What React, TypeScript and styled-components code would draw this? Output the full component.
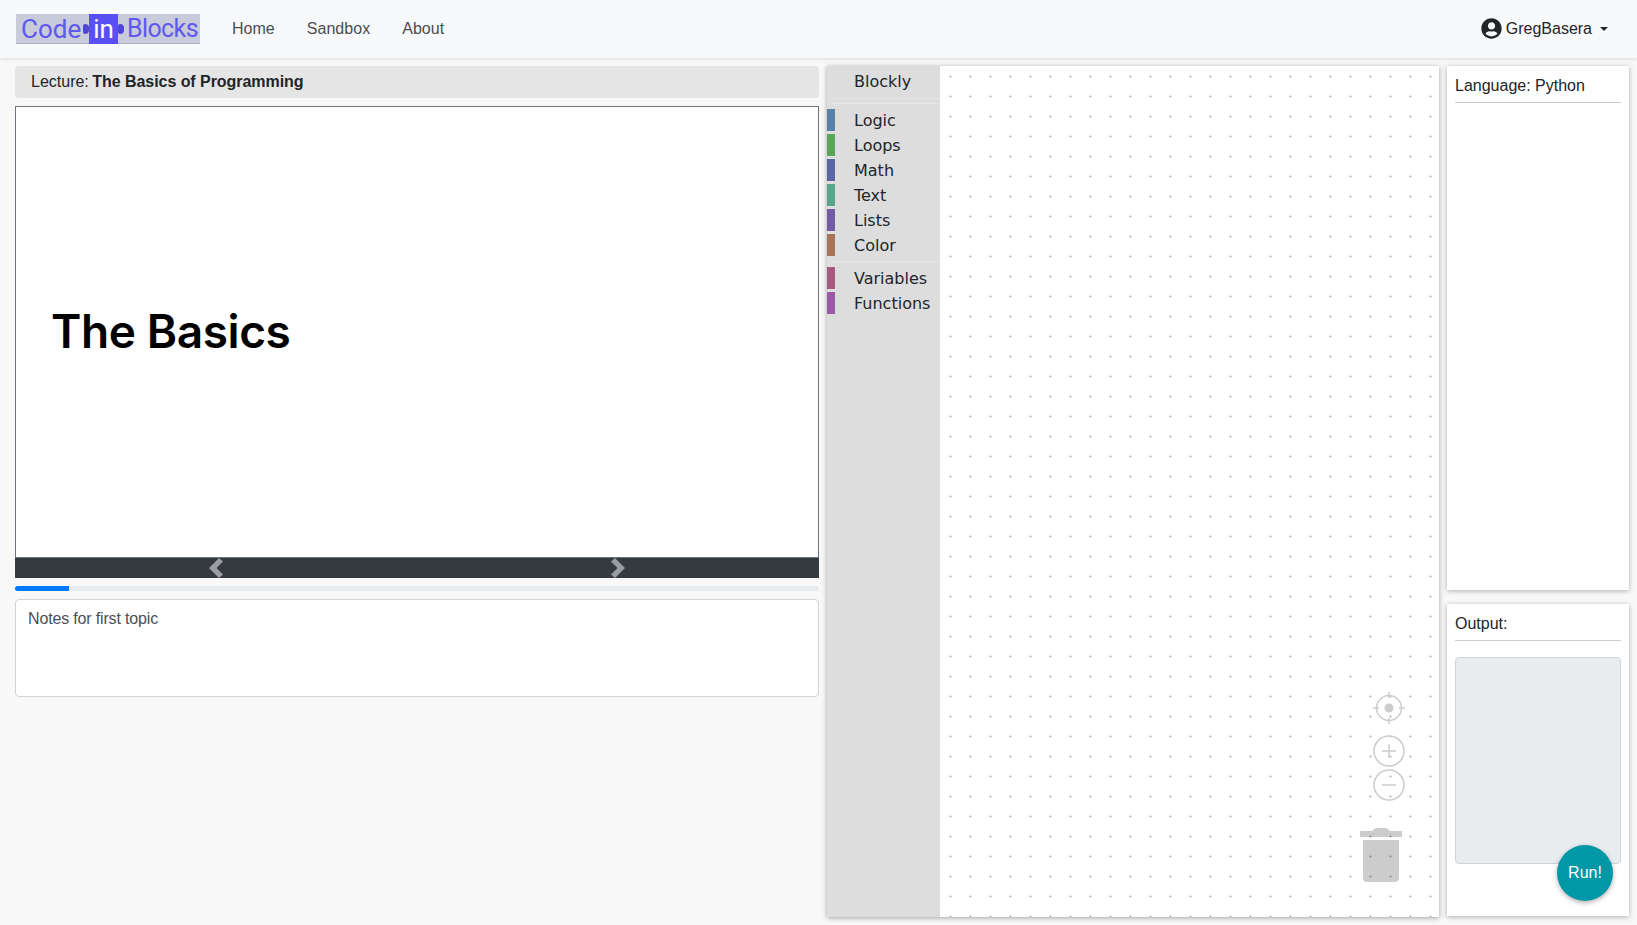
import styled, { createGlobalStyle } from "styled-components";
import { FaUserCircle } from "react-icons/fa";

const categories = [
  { name: "Logic", color: "#5b80a5" },
  { name: "Loops", color: "#5ba55b" },
  { name: "Math", color: "#5b67a5" },
  { name: "Text", color: "#5ba58c" },
  { name: "Lists", color: "#745ba5" },
  { name: "Color", color: "#a5745b" },
];

const extras = [
  { name: "Variables", color: "#a55b80" },
  { name: "Functions", color: "#995ba5" },
];

export default function App() {
  return (
    <>
      <GlobalStyle />
      <Navbar>
        <Logo>
          <LogoWord>Code</LogoWord>
          <LogoBlock>in</LogoBlock>
          <LogoWordTight>Blocks</LogoWordTight>
        </Logo>
        <NavLink>Home</NavLink>
        <NavLink>Sandbox</NavLink>
        <NavLink>About</NavLink>
        <UserMenu>
          <UserIcon size={21} color="#212529" />
          <span>GregBasera</span>
          <Caret />
        </UserMenu>
      </Navbar>
      <Main>
        <LeftColumn>
          <LectureBar>
            Lecture: <b>The Basics of Programming</b>
          </LectureBar>
          <Slide>
            <SlideTitle>The Basics</SlideTitle>
          </Slide>
          <SlideControls>
            <ControlCell>
              <svg width="14" height="20" viewBox="0 0 14 20">
                <path d="M10 0l4 3.5L7.5 10 14 16.500 10 20 0 10z" fill="#9a9da0" />
              </svg>
            </ControlCell>
            <ControlCell>
              <svg width="14" height="20" viewBox="0 0 14 20">
                <path d="M4 0L0 3.500 6.500 10 0 16.500 4 20 14 10z" fill="#9a9da0" />
              </svg>
            </ControlCell>
          </SlideControls>
          <Progress>
            <ProgressFill />
          </Progress>
          <Notes>Notes for first topic</Notes>
        </LeftColumn>
        <BlocklyPanel>
          <Toolbox>
            <ToolboxHeader>Blockly</ToolboxHeader>
            <Separator $double />
            {categories.map((c) => (
              <Category key={c.name} $color={c.color}>
                {c.name}
              </Category>
            ))}
            <Separator />
            {extras.map((c) => (
              <Category key={c.name} $color={c.color}>
                {c.name}
              </Category>
            ))}
          </Toolbox>
          <Workspace>
            <GridLayer width="100%" height="100%">
              <defs>
                <pattern id="dots" width="20" height="20" patternUnits="userSpaceOnUse">
                  <rect x="9" y="10" width="3" height="1" fill="#ccc" />
                  <rect x="10" y="9" width="1" height="3" fill="#ccc" />
                </pattern>
              </defs>
              <rect width="100%" height="100%" fill="url(#dots)" />
            </GridLayer>
            <WorkspaceControls width="50" height="200" viewBox="0 0 50 200">
              <g fill="none" stroke="#ccc" strokeWidth="1.5">
                <circle cx="25" cy="20" r="12.5" />
                <path d="M25 4v6M25 30v6M9 20h6M35 20h6" />
                <circle cx="25" cy="63" r="15" />
                <path d="M25 56v14M18 63h14" />
                <circle cx="25" cy="97" r="15" />
                <path d="M18 97h14" />
              </g>
              <circle cx="25" cy="20" r="4.500" fill="#ccc" />
            </WorkspaceControls>
            <Trash width="42" height="54" viewBox="0 0 42 54">
              <path
                d="M0 3h12.500c1-2 2.500-3 4.500-3h8c2 0 3.500 1 4.500 3H42v6H0zM3 12h36v38c0 2.500-1.500 4-4 4H7c-2.500 0-4-1.500-4-4z"
                fill="#000"
                fillOpacity="0.2"
              />
            </Trash>
          </Workspace>
        </BlocklyPanel>
        <RightColumn>
          <LanguageCard>
            <CardTitle>Language: Python</CardTitle>
          </LanguageCard>
          <OutputCard>
            <CardTitle>Output:</CardTitle>
            <OutputBox />
            <RunButton>Run!</RunButton>
          </OutputCard>
        </RightColumn>
      </Main>
    </>
  );
}

const GlobalStyle = createGlobalStyle`
  html, body {
    margin: 0;
    height: 100%;
    overflow: hidden;
    background: #f8f8f8;
    font-family: "Liberation Sans", Arial, sans-serif;
    font-size: 16px;
    color: #212529;
  }
  * {
    box-sizing: border-box;
  }
`;

const Navbar = styled.nav`
  display: flex;
  align-items: center;
  height: 58px;
  padding: 0 29px 0 16px;
  background: #f8f9fa;
  box-shadow: 0 1px 4px rgba(0, 0, 0, 0.12);
`;

const Logo = styled.div`
  display: flex;
  align-items: center;
  width: 184px;
  height: 30px;
  margin-right: 16px;
  padding-left: 5px;
  background: #c8cbda;
  border-bottom: 1px solid #aeb0c2;
`;

const LogoWord = styled.span`
  width: 60px;
  font-family: Roboto, sans-serif;
  font-size: 26px;
  font-weight: 400;
  color: #6057ef;
`;

const LogoWordTight = styled(LogoWord)`
  width: 69px;
  margin-left: 9px;
  font-size: 25px;
  letter-spacing: -0.6px;
`;

const LogoBlock = styled.span`
  position: relative;
  flex: none;
  width: 29px;
  height: 30px;
  margin-left: 8px;
  background: #5a4ff3;
  font-family: Roboto, sans-serif;
  font-size: 26px;
  font-weight: 400;
  line-height: 30px;
  text-align: center;
  color: #fff;
  &::before,
  &::after {
    content: "";
    position: absolute;
    top: 10px;
    width: 6px;
    height: 10px;
    background: #4d44d8;
    border-radius: 2px 4px 4px 2px;
  }
  &::before {
    left: -6px;
  }
  &::after {
    right: -6px;
  }
`;

const NavLink = styled.a`
  padding: 0 16px;
  color: #4a4d50;
  letter-spacing: 0.03px;
`;

const UserMenu = styled.div`
  display: flex;
  align-items: center;
  gap: 4px;
  margin-left: auto;
`;

const UserIcon = styled(FaUserCircle)`
  margin-bottom: 2px;
`;

const Caret = styled.span`
  margin-left: 4px;
  border-top: 4.8px solid #212529;
  border-left: 4.8px solid transparent;
  border-right: 4.8px solid transparent;
`;

const Main = styled.main`
  display: flex;
  align-items: flex-start;
  padding: 8px 8px 0 15px;
`;

const LeftColumn = styled.section`
  display: flex;
  flex-direction: column;
  width: 804px;
  margin-right: 8px;
`;

const LectureBar = styled.div`
  height: 32px;
  margin-bottom: 8px;
  padding: 0 16px;
  background: #e5e5e5;
  border-radius: 4px;
  line-height: 31px;
  b {
    margin-left: -1px;
    letter-spacing: -0.05px;
  }
`;

const Slide = styled.div`
  display: flex;
  align-items: center;
  height: 452px;
  padding: 0 0 2px 35px;
  background: #fff;
  border: 1px solid #6c757d;
`;

const SlideTitle = styled.h1`
  margin: 0;
  font-family: Inter, sans-serif;
  font-size: 46px;
  font-weight: 600;
  letter-spacing: -0.4px;
  color: #000;
`;

const SlideControls = styled.div`
  display: flex;
  height: 20px;
  background: #343a40;
`;

const ControlCell = styled.div`
  flex: 1;
  display: flex;
  align-items: center;
  justify-content: center;
`;

const Progress = styled.div`
  height: 5px;
  margin: 8px 0;
  background: #e9ecef;
  border-radius: 4px;
  overflow: hidden;
`;

const ProgressFill = styled.div`
  width: 54px;
  height: 100%;
  background: #007bff;
`;

const Notes = styled.div`
  height: 98px;
  padding: 10px 12px;
  background: #fff;
  border: 1px solid #ced4da;
  border-radius: 4px;
  color: #495057;
  letter-spacing: -0.16px;
`;

const BlocklyPanel = styled.section`
  display: flex;
  width: 612px;
  height: 851px;
  background: #fff;
  box-shadow: 0 1px 5px rgba(0, 0, 0, 0.35);
`;

const Toolbox = styled.div`
  flex: none;
  width: 113px;
  background: #ddd;
  font-family: "DejaVu Sans", sans-serif;
  font-size: 16px;
  color: #212529;
`;

const ToolboxHeader = styled.div`
  height: 32px;
  padding-left: 27px;
  line-height: 31px;
`;

const Separator = styled.div<{ $double?: boolean }>`
  height: ${(p) => (p.$double ? "6px" : "1px")};
  margin: ${(p) => (p.$double ? "0 0 5px 5px" : "5px 0 5px 5px")};
  border-top: 1px solid #e6e6e6;
  border-bottom: ${(p) => (p.$double ? "1px solid #e6e6e6" : "none")};
`;

const Category = styled.div<{ $color: string }>`
  height: 22px;
  margin-bottom: 3px;
  padding-left: 19px;
  border-left: 8px solid ${(p) => p.$color};
  line-height: 23px;
`;

const Workspace = styled.div`
  position: relative;
  flex: 1;
  overflow: hidden;
`;

const GridLayer = styled.svg`
  position: absolute;
  inset: 0;
`;

const WorkspaceControls = styled.svg`
  position: absolute;
  top: 622px;
  right: 25px;
`;

const Trash = styled.svg`
  position: absolute;
  top: 762px;
  right: 37px;
`;

const RightColumn = styled.section`
  display: flex;
  flex-direction: column;
  gap: 14px;
  width: 182px;
  margin-left: 8px;
`;

const Card = styled.div`
  padding: 8px;
  background: #fff;
  box-shadow: 0 1px 5px rgba(0, 0, 0, 0.3);
`;

const LanguageCard = styled(Card)`
  height: 524px;
`;

const OutputCard = styled(Card)`
  position: relative;
  height: 312px;
`;

const CardTitle = styled.div`
  height: 29px;
  line-height: 24px;
  border-bottom: 1px solid #ccc;
`;

const OutputBox = styled.div`
  height: 207px;
  margin-top: 16px;
  background: #e9ecef;
  border: 1px solid #ced4da;
  border-radius: 4px;
`;

const RunButton = styled.button`
  position: absolute;
  right: 16px;
  bottom: 15px;
  width: 56px;
  height: 56px;
  padding: 0;
  background: #0097a7;
  border: none;
  border-radius: 50%;
  box-shadow: 0 2px 5px rgba(0, 0, 0, 0.3);
  font: inherit;
  color: #fff;
`;
